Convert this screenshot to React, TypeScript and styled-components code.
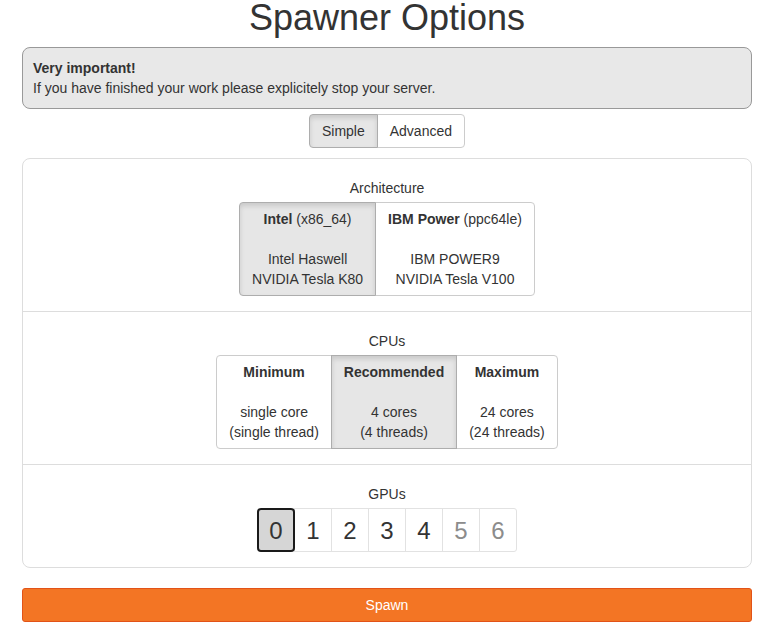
import React from "react";
import styled, { createGlobalStyle, css } from "styled-components";

const GlobalStyle = createGlobalStyle`
  html, body { margin: 0; padding: 0; background: #fff; }
  body {
    font-family: "Liberation Sans", Arial, Helvetica, sans-serif;
    font-size: 14px;
    line-height: 20px;
    color: #333;
  }
  * { box-sizing: border-box; }
`;

const Page = styled.div`
  padding: 0 23px 0 22px;
`;

const Title = styled.h1`
  margin: 0 0 11px;
  font-size: 36px;
  font-weight: 400;
  line-height: 36px;
  text-align: center;
  color: #333;
`;

const Alert = styled.div`
  background: #e8e8e8;
  border: 1px solid #999;
  border-radius: 8px;
  padding: 10px 10px 10px;
`;

const ModeRow = styled.div`
  display: flex;
  justify-content: center;
  margin: 5px 0 10px;
`;

const Group = styled.div`
  display: inline-flex;
`;

const Btn = styled.button<{ $active?: boolean }>`
  font: inherit;
  color: #333;
  padding: 6px 12px;
  line-height: 20px;
  border: 1px solid #ccc;
  background: #fff;
  cursor: pointer;
  & + & { margin-left: -1px; }
  &:first-child { border-radius: 4px 0 0 4px; }
  &:last-child { border-radius: 0 4px 4px 0; }
  ${(p) =>
    p.$active &&
    css`
      background: #e6e6e6;
      border-color: #adadad;
      box-shadow: inset 0 3px 5px rgba(0, 0, 0, 0.125);
      position: relative;
    `}
`;

const Panel = styled.div`
  border: 1px solid #ddd;
  border-radius: 8px;
`;

const Section = styled.div`
  padding: 19px 0 15px;
  text-align: center;
  & + & { border-top: 1px solid #ddd; }
`;

const Label = styled.div`
  margin-bottom: 4px;
`;

const OptionBtn = styled(Btn)`
  display: flex;
  flex-direction: column;
  align-items: center;
  white-space: nowrap;
`;

const Line = styled.span`
  display: block;
  height: 20px;
`;

const GpuGroup = styled.div`
  display: inline-flex;
`;

const GpuBtn = styled.button<{ $selected?: boolean; $disabled?: boolean }>`
  font-family: inherit;
  font-size: 24px;
  line-height: 29px;
  width: 38px;
  height: 44px;
  padding: 0;
  display: flex;
  align-items: center;
  justify-content: center;
  background: #fff;
  border: 1px solid #e2e2e2;
  color: ${(p) => (p.$disabled ? "#8c8c8c" : "#333")};
  & + & { margin-left: -1px; }
  &:first-child { border-radius: 3px 0 0 3px; }
  &:last-child { border-radius: 0 3px 3px 0; }
  ${(p) =>
    p.$selected &&
    css`
      background: #d6d6d6;
      border: 2px solid #1a1a1a;
      border-radius: 4px !important;
      position: relative;
      z-index: 1;
    `}
`;

const Spawn = styled.button`
  display: block;
  width: 100%;
  margin-top: 20px;
  height: 34px;
  font: inherit;
  color: #fff;
  background: #f37524;
  border: 1px solid #e25318;
  border-radius: 3px;
  cursor: pointer;
`;

export default function App() {
  const gpus = [0, 1, 2, 3, 4, 5, 6];
  return (
    <>
      <GlobalStyle />
      <Page>
        <Title>Spawner Options</Title>
        <Alert>
          <b>Very important!</b>
          <br />
          If you have finished your work please explicitely stop your server.
        </Alert>
        <ModeRow>
          <Group>
            <Btn $active>Simple</Btn>
            <Btn>Advanced</Btn>
          </Group>
        </ModeRow>
        <Panel>
          <Section>
            <Label>Architecture</Label>
            <Group>
              <OptionBtn $active>
                <Line>
                  <b>Intel</b> (x86_64)
                </Line>
                <Line />
                <Line>Intel Haswell</Line>
                <Line>NVIDIA Tesla K80</Line>
              </OptionBtn>
              <OptionBtn>
                <Line>
                  <b>IBM Power</b> (ppc64le)
                </Line>
                <Line />
                <Line>IBM POWER9</Line>
                <Line>NVIDIA Tesla V100</Line>
              </OptionBtn>
            </Group>
          </Section>
          <Section>
            <Label>CPUs</Label>
            <Group>
              <OptionBtn>
                <Line>
                  <b>Minimum</b>
                </Line>
                <Line />
                <Line>single core</Line>
                <Line>(single thread)</Line>
              </OptionBtn>
              <OptionBtn $active>
                <Line>
                  <b>Recommended</b>
                </Line>
                <Line />
                <Line>4 cores</Line>
                <Line>(4 threads)</Line>
              </OptionBtn>
              <OptionBtn>
                <Line>
                  <b>Maximum</b>
                </Line>
                <Line />
                <Line>24 cores</Line>
                <Line>(24 threads)</Line>
              </OptionBtn>
            </Group>
          </Section>
          <Section>
            <Label>GPUs</Label>
            <GpuGroup>
              {gpus.map((g) => (
                <GpuBtn key={g} $selected={g === 0} $disabled={g > 4}>
                  {g}
                </GpuBtn>
              ))}
            </GpuGroup>
          </Section>
        </Panel>
        <Spawn>Spawn</Spawn>
      </Page>
    </>
  );
}
